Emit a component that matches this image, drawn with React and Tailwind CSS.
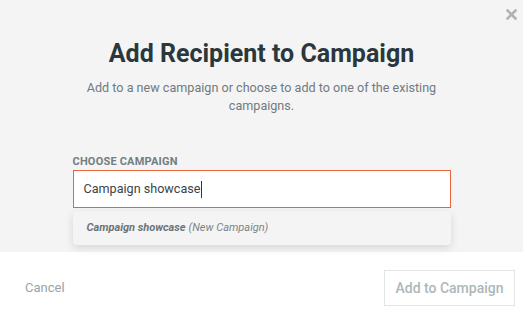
import React from 'react';

function App() {
  return (
    <div className="w-[523px] h-[315px] flex flex-col bg-white font-['Roboto',sans-serif] overflow-hidden">
      <div className="relative h-[252px] bg-[#f4f4f4] flex flex-col items-center shrink-0">
        <button className="absolute right-[5px] top-[8px] w-[13px] h-[13px] flex items-center justify-center">
          <svg width="11" height="11" viewBox="0 0 11 11">
            <path d="M1.5 1.5 L9.5 9.5 M9.5 1.5 L1.5 9.5" stroke="#a9b4b7" strokeWidth="2.5" strokeLinecap="square" />
          </svg>
        </button>
        <h1 className="mt-[39px] text-[25px] leading-[30px] font-bold text-[#2a383d]">
          Add Recipient to Campaign
        </h1>
        <p className="mt-[10px] w-[380px] text-center text-[12.6px] leading-[18px] text-[#717b7f]">
          Add to a new campaign or choose to add to one of the existing campaigns.
        </p>
        <div className="mt-[40px] w-[378px]">
          <label className="block text-[11px] leading-[14px] font-bold tracking-[0.2px] text-[#737d81]">
            CHOOSE CAMPAIGN
          </label>
          <div className="mt-[1px] h-[38px] bg-white border border-[#e8643a] flex items-center pl-[10px]">
            <span className="text-[12.6px] text-[#3a4347]">Campaign showcase</span>
            <span className="w-px h-[17px] bg-[#2a383d] ml-px"></span>
          </div>
          <div className="mt-[3px] h-[34px] bg-[#f4f4f4] rounded-[4px] shadow-[0_3px_8px_rgba(0,0,0,0.12)] flex items-center pl-[14px] text-[11px] italic text-[#7a8488]">
            <span className="font-bold text-[#6b7579]">Campaign showcase</span>
            <span className="ml-[3px]">(New Campaign)</span>
          </div>
        </div>
      </div>
      <div className="flex-1 flex items-start justify-between pl-[25px] pr-[8px] pt-[18px]">
        <span className="mt-[9px] text-[13px] leading-[18px] text-[#9aa3a6]">Cancel</span>
        <button className="w-[131px] h-[36px] border border-[#e2e5e6] bg-white text-[14px] font-medium text-[#adb7ba]">
          Add to Campaign
        </button>
      </div>
    </div>
  );
}

export default App;
